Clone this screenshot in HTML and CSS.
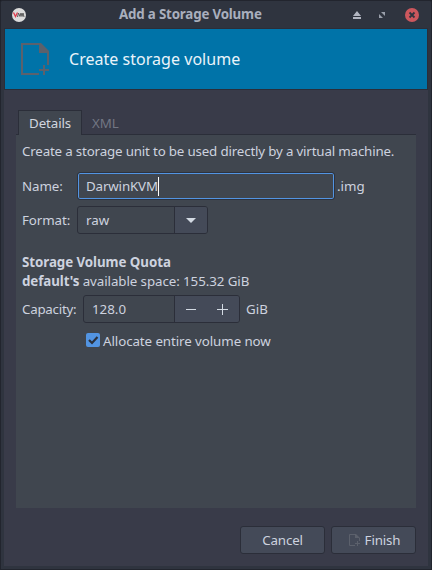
FILE: index.html
```html
<!DOCTYPE html>
<html lang="en">
<head>
<meta charset="utf-8">
<title>Add a Storage Volume</title>
<link rel="stylesheet" href="styles.css">
</head>
<body>
<div class="window">
  <header class="titlebar">
    <svg class="app-icon" width="14" height="14" viewBox="0 0 14 14"><circle cx="7" cy="7" r="7" fill="#dcdcdc"/><path d="M1.5 4.5l2 4 2-4" fill="none" stroke="#e0384c" stroke-width="1.3"/><path d="M5.5 9l1-4 1.5 3.5 1-3.5 1 3.5 1-3.5 1 4" fill="none" stroke="#5a5a5a" stroke-width="1"/></svg>
    <h1 class="title">Add a Storage Volume</h1>
    <div class="controls">
      <svg width="8" height="8" viewBox="0 0 8 8" fill="#b2b6c1"><path d="M4 0l4 5H0zM0 6h8v2H0z"/></svg>
      <svg width="6" height="6" viewBox="0 0 6 6" fill="#9a9faa"><path d="M2 0h4v4zM0 2l4 4H0z"/></svg>
      <svg width="14" height="14" viewBox="0 0 14 14"><circle cx="7" cy="7" r="7" fill="#cc575d"/><path d="M4.5 4.5l5 5m0-5l-5 5" stroke="#2f343f" stroke-width="1.8"/></svg>
    </div>
  </header>
  <main class="client">
    <div class="banner">
      <svg width="28" height="32" viewBox="0 0 28 32"><path d="M18 31H1V1h18M27 10v12" fill="none" stroke="#5c616c" stroke-width="2"/><path d="M18 0h2l8 8v2H18zM22 22h2v4h4v2h-4v4h-2v-4h-4v-2h4z" fill="#5c616c"/></svg>
      <h2>Create storage volume</h2>
    </div>
    <nav class="tabs"><span class="tab active">Details</span><span class="tab">XML</span></nav>
    <section class="panel">
      <p class="intro">Create a storage unit to be used directly by a virtual machine.</p>
      <div class="row name-row"><label>Name:</label><div class="entry">DarwinKVM<i class="caret"></i></div><span class="suffix">.img</span></div>
      <div class="row format-row"><label>Format:</label><div class="combo"><span class="value">raw</span><span class="arrow"><svg width="10" height="5" viewBox="0 0 10 5"><path d="M0 0h10L5 5z" fill="#d3dae3"/></svg></span></div></div>
      <h3>Storage Volume Quota</h3>
      <p class="space"><b>default's</b> available space: 155.32 GiB</p>
      <div class="row capacity-row"><label>Capacity:</label><div class="spin"><span class="value">128.0</span><span class="steps"><svg width="43" height="12" viewBox="0 0 43 12"><path d="M0 6.5h10M31 6.5h11M36.5 1v11" stroke="#d3dae3" fill="none"/></svg></span></div><span class="unit">GiB</span></div>
      <div class="check"><span class="box"><svg width="14" height="14" viewBox="0 0 14 14"><path d="M3 7l3 3 5.5-6" fill="none" stroke="#2b303b" stroke-width="2.2"/></svg></span>Allocate entire volume now</div>
    </section>
    <footer class="actions">
      <button>Cancel</button>
      <button><svg width="11" height="12" viewBox="0 0 11 12"><path d="M6 11.5H.5V.5h6M10.5 4v3M8.5 7v5M6 9.5h5" fill="none" stroke="#5c616c"/><path d="M6 0h1l4 4H6z" fill="#5c616c"/></svg>Finish</button>
    </footer>
  </main>
</div>
</body>
</html>
```

FILE: styles.css
```css
* { box-sizing: border-box; }
body { margin: 0; background: #1c1f26; }
h1, h2, h3, p { margin: 0; }
svg { display: block; flex: none; }

.window {
  width: 432px;
  height: 570px;
  padding: 0 3px 3px;
  background: #2f343f;
  border: 1px solid #22252e;
  border-radius: 2px 2px 0 0;
  font: 13.33px/18px "Noto Sans", sans-serif;
  color: #cdd2df;
}

.titlebar { display: flex; align-items: center; height: 27px; padding: 0 9px 0 8px; }
.title { flex: 1; margin: -1px 0 0 93px; font-size: 13.33px; line-height: 18px; letter-spacing: -0.18px; color: #a9afbd; }
.controls { display: flex; align-items: center; gap: 17px; }
.controls svg:first-child { margin-right: 1px; }
.controls svg:nth-child(3) { margin-left: 3px; }

.client { width: 424px; height: 538px; background: #393b49; }
.banner {
  display: flex;
  align-items: center;
  gap: 20px;
  height: 62px;
  padding-left: 16px;
  background: #0073a8;
  border: 1px solid #2b2e39;
}
.banner h2 { font-size: 16px; line-height: 22px; font-weight: 400; color: #eaf4fa; letter-spacing: 0.03px; }

.tabs { display: flex; height: 45px; padding: 20px 0 0 14px; }
.tab { width: 55px; height: 25px; padding: 4px 0 0 10px; letter-spacing: -0.1px; color: #727683; }
.tab.active {
  position: relative;
  z-index: 1;
  width: 64px;
  color: #d0d5df;
  background: #40464f;
  border: 1px solid #2b2e39;
  border-bottom: 0;
  padding-top: 3px;
}

.panel {
  width: 400px;
  height: 374px;
  margin: -1px 0 0 12px;
  padding: 7px 0 0 6px;
  background: #40464f;
  border-top: 1px solid #2b2e39;
}
.intro { letter-spacing: -0.17px; }
.row { display: flex; align-items: center; }
.name-row { height: 28px; margin-top: 12px; }
.name-row label, .format-row label { width: 55px; letter-spacing: -0.1px; }
.entry {
  display: flex;
  align-items: center;
  width: 258px;
  height: 28px;
  padding-left: 8px;
  letter-spacing: -0.15px;
  border: 1px solid #2d323e;
  border-radius: 3px;
  box-shadow: inset 0 0 0 1px #5294e2;
}
.caret { width: 1px; height: 19px; background: #fff; }
.suffix { margin-left: 2px; }
.format-row { height: 28px; margin-top: 6px; }
.combo, .spin { display: flex; height: 28px; border: 1px solid #2b2e39; border-radius: 3px; overflow: hidden; }
.combo { width: 131px; }
.value { display: flex; align-items: center; width: 97px; padding-left: 8px; border-right: 1px solid #2b2e39; }
.arrow, .steps { display: flex; flex: 1; align-items: center; justify-content: center; background: #444a58; }
h3 { margin-top: 19px; font-size: 13.33px; line-height: 18px; letter-spacing: -0.06px; }
.space { line-height: 20px; letter-spacing: -0.08px; }
.capacity-row { height: 28px; margin-top: 4px; }
.capacity-row label { width: 61px; letter-spacing: -0.25px; }
.spin { width: 157px; }
.spin .value { width: 91px; }
.unit { margin-left: 6px; }
.check { display: flex; align-items: center; gap: 3px; margin: 9px 0 0 64px; letter-spacing: -0.08px; }
.box { width: 14px; height: 14px; margin-top: -2px; background: #5294e2; border-radius: 2px; }

.actions { display: flex; justify-content: flex-end; gap: 6px; padding: 18px 12px 0 0; }
button {
  display: flex;
  align-items: center;
  justify-content: center;
  gap: 5px;
  width: 85px;
  height: 28px;
  padding: 0;
  border: 1px solid #2b2e39;
  border-radius: 3px;
  background: #444a58;
  color: inherit;
  font: inherit;
  letter-spacing: -0.15px;
}
button svg { margin-left: 2px; }
```
